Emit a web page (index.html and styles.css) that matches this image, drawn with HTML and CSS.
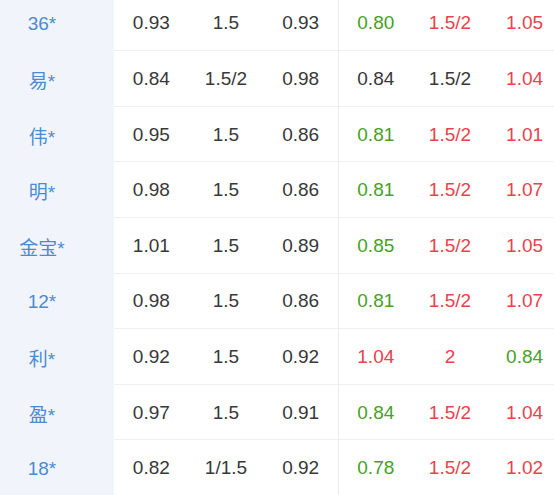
FILE: index.html
```html
<!DOCTYPE html>
<html>
<head>
<meta charset="utf-8">
<link rel="stylesheet" href="styles.css">
</head>
<body>
<div class="table">
  <div class="row"><div class="name">36*</div><div class="c">0.93</div><div class="c">1.5</div><div class="c">0.93</div><div class="c div g">0.80</div><div class="c r">1.5/2</div><div class="c r">1.05</div></div>
  <div class="row"><div class="name">易*</div><div class="c">0.84</div><div class="c">1.5/2</div><div class="c">0.98</div><div class="c div">0.84</div><div class="c">1.5/2</div><div class="c r">1.04</div></div>
  <div class="row"><div class="name">伟*</div><div class="c">0.95</div><div class="c">1.5</div><div class="c">0.86</div><div class="c div g">0.81</div><div class="c r">1.5/2</div><div class="c r">1.01</div></div>
  <div class="row"><div class="name">明*</div><div class="c">0.98</div><div class="c">1.5</div><div class="c">0.86</div><div class="c div g">0.81</div><div class="c r">1.5/2</div><div class="c r">1.07</div></div>
  <div class="row"><div class="name">金宝*</div><div class="c">1.01</div><div class="c">1.5</div><div class="c">0.89</div><div class="c div g">0.85</div><div class="c r">1.5/2</div><div class="c r">1.05</div></div>
  <div class="row"><div class="name">12*</div><div class="c">0.98</div><div class="c">1.5</div><div class="c">0.86</div><div class="c div g">0.81</div><div class="c r">1.5/2</div><div class="c r">1.07</div></div>
  <div class="row"><div class="name">利*</div><div class="c">0.92</div><div class="c">1.5</div><div class="c">0.92</div><div class="c div r">1.04</div><div class="c r">2</div><div class="c g">0.84</div></div>
  <div class="row"><div class="name">盈*</div><div class="c">0.97</div><div class="c">1.5</div><div class="c">0.91</div><div class="c div g">0.84</div><div class="c r">1.5/2</div><div class="c r">1.04</div></div>
  <div class="row"><div class="name">18*</div><div class="c">0.82</div><div class="c">1/1.5</div><div class="c">0.92</div><div class="c div g">0.78</div><div class="c r">1.5/2</div><div class="c r">1.02</div></div>
</div>
</body>
</html>
```
FILE: styles.css
```css
html, body {
  margin: 0;
  padding: 0;
  background: #ffffff;
  overflow: hidden;
}
body {
  width: 554px;
  height: 495px;
  font-family: "Liberation Sans", Arial, "Noto Sans CJK SC", sans-serif;
  font-size: 19px;
  color: #383838;
}
.table {
  margin-top: -4.4px;
  width: 564px;
}
.row {
  display: grid;
  grid-template-columns: 114px repeat(6, 74.67px);
  height: 55.6px;
}
.name {
  background: #f1f5fb;
  color: #4a8bd3;
  display: flex;
  align-items: center;
  justify-content: center;
  padding-right: 30px;
  padding-top: 1px;
  font-family: "Liberation Sans", "Noto Sans CJK SC", sans-serif;
}
.c {
  display: flex;
  align-items: center;
  justify-content: center;
  padding-top: 1px;
  border-bottom: 1px solid #efefef;
  box-sizing: border-box;
}
.div {
  border-left: 1px solid #ebebeb;
}
.g { color: #46a125; }
.r { color: #e8434b; }
```
